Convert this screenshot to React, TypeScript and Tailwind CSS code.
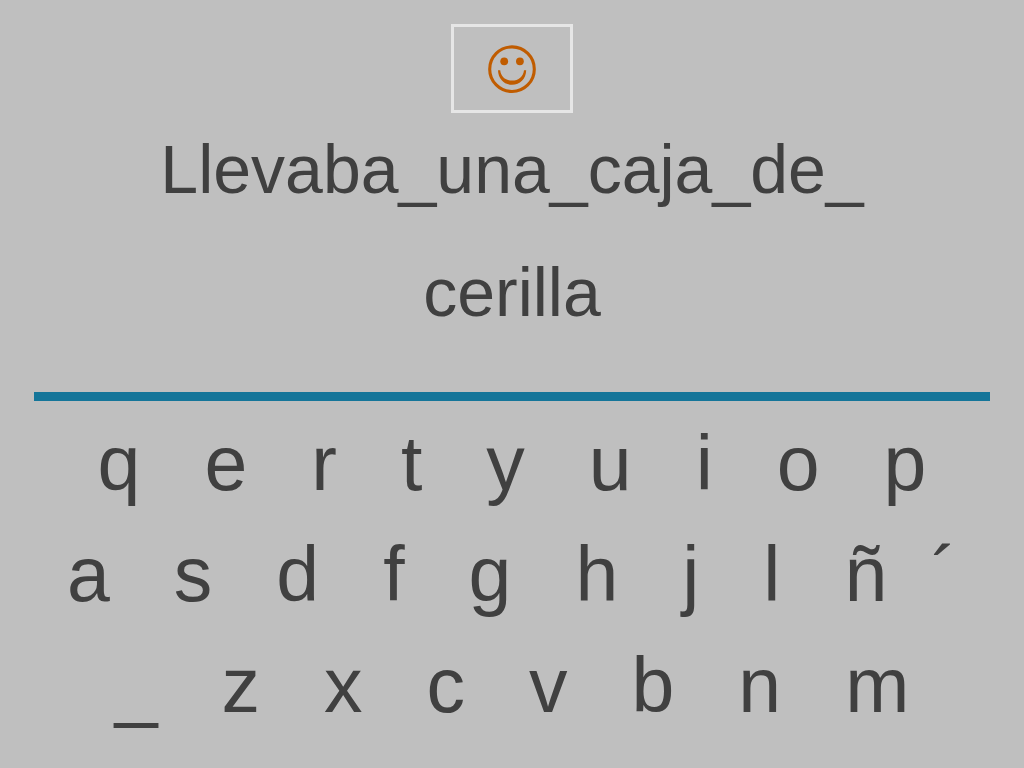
const rows: string[][] = [
  ["q", "e", "r", "t", "y", "u", "i", "o", "p"],
  ["a", "s", "d", "f", "g", "h", "j", "l", "ñ", "´"],
  ["_", "z", "x", "c", "v", "b", "n", "m"],
];

function Smiley() {
  return (
    <svg viewBox="0 0 50 50" className="size-[50px]" fill="none" aria-hidden="true">
      <circle cx="25" cy="25.2" r="22.3" stroke="#c05c00" strokeWidth="3.1" />
      <circle cx="17.2" cy="17.3" r="3.9" fill="#c05c00" />
      <circle cx="32.9" cy="17.3" r="3.9" fill="#c05c00" />
      <path
        d="M11 26.2C11.2 34.8 17.3 40.8 25.1 40.8S39 34.8 39.2 26.2H37C36.4 32.5 31.6 36.6 25.1 36.6S13.8 32.5 13.2 26.2Z"
        fill="#c05c00"
      />
    </svg>
  );
}

export default function App() {
  return (
    <main className="flex min-h-screen flex-col items-center bg-[#bfbfbf] pt-6 font-['Liberation_Sans',Arial,sans-serif] text-[#404040]">
      <div className="flex h-[89px] w-[122px] items-center justify-center border-3 border-[#e6e6e6]">
        <Smiley />
      </div>
      <h1 className="-mt-[5px] text-center text-[68px] leading-[123px]">
        Llevaba_una_caja_de_
        <br />
        cerilla
      </h1>
      <hr className="mt-[38px] h-[9px] w-full max-w-[956px] border-0 bg-[#147599]" />
      <div className="mt-[7px] flex flex-col items-center text-[77px] leading-[111px]">
        {rows.map((row) => (
          <div key={row[0]} className="flex gap-16">
            {row.map((key) => (
              <button key={key} type="button" className={key === "´" ? "-ml-5" : ""}>
                {key}
              </button>
            ))}
          </div>
        ))}
      </div>
    </main>
  );
}
